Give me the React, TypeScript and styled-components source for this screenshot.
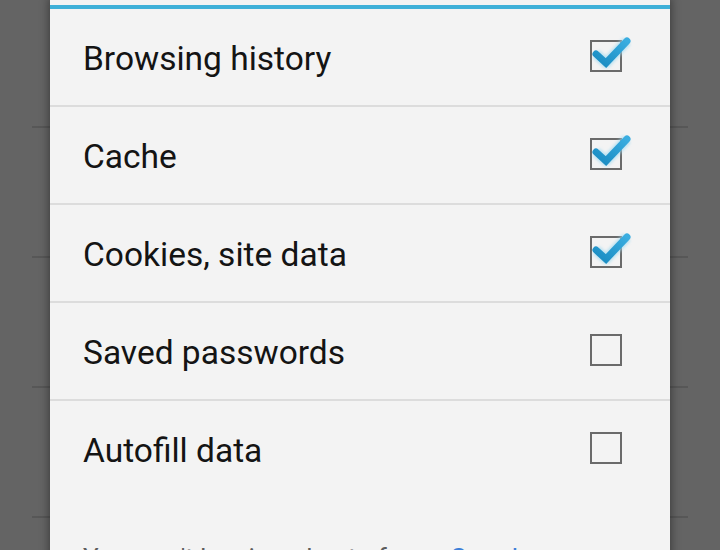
import React from 'react';
import styled, {createGlobalStyle} from "styled-components";

const GlobalStyle = createGlobalStyle`
  html, body {
    margin: 0;
    padding: 0;
    background: #646464;
    font-family: Roboto, "Noto Sans", sans-serif;
    overflow: hidden;
  }
`

type ItemType = {
    label: string
    checked: boolean
}

const items: ItemType[] = [
    {label: "Browsing history", checked: true},
    {label: "Cache", checked: true},
    {label: "Cookies, site data", checked: true},
    {label: "Saved passwords", checked: false},
    {label: "Autofill data", checked: false},
]

const CheckBox = (props: { checked: boolean }) => {
    return (
        <StyledCheck width="44" height="40" viewBox="0 0 44 40">
            <defs>
                <linearGradient id="tick" x1="0" y1="1" x2="1" y2="0">
                    <stop offset="0" stopColor="#1a8cc2"/>
                    <stop offset="1" stopColor="#3aade0"/>
                </linearGradient>
                <filter id="glow" x="-30%" y="-30%" width="160%" height="160%">
                    <feGaussianBlur stdDeviation="1.6"/>
                </filter>
            </defs>
            <rect x="2" y="5" width="30" height="30" fill="none" stroke="#6a6a6a" strokeWidth="2"/>
            {props.checked && <>
                <polyline points="7,18 17,27 38,5" fill="none" stroke="#9fd9f0" strokeWidth="10"
                          strokeLinejoin="round" filter="url(#glow)" opacity="0.7"/>
                <polyline points="7,18 17,27 38,5" fill="none" stroke="url(#tick)" strokeWidth="7"
                          strokeLinecap="round" strokeLinejoin="miter"/>
            </>}
        </StyledCheck>
    )
}

export default function App() {
    return (
        <>
            <GlobalStyle/>
            <Screen>
                <Backdrop>
                    <BackRow $first/>
                    <BackRow/>
                    <BackRow/>
                    <BackRow/>
                </Backdrop>
                <Dialog>
                    <AccentBar/>
                    {items.map((item, i) => (
                        <Row key={item.label} $last={i === items.length - 1}>
                            <Label>{item.label}</Label>
                            <CheckBox checked={item.checked}/>
                        </Row>
                    ))}
                    <Note>You won't be signed out of your <NoteLink>Google</NoteLink> account.</Note>
                </Dialog>
            </Screen>
        </>
    );
}

const Screen = styled.div`
  position: relative;
  width: 720px;
  height: 550px;
  overflow: hidden;
  background: #646464;
`

const Backdrop = styled.div`
  padding: 0 32px;
`

const BackRow = styled.div<{ $first?: boolean }>`
  height: ${props => props.$first ? 126 : 128}px;
  border-bottom: 2px solid #575757;
`

const Dialog = styled.div`
  position: absolute;
  top: 0;
  left: 50px;
  width: 620px;
  height: 600px;
  padding-top: 5px;
  box-sizing: border-box;
  background: #f3f3f3;
  box-shadow: 0 0 8px 2px rgba(0, 0, 0, 0.35);
`

const AccentBar = styled.div`
  height: 4px;
  background: #3fb0d8;
`

const Row = styled.div<{ $last?: boolean }>`
  height: 96px;
  display: flex;
  align-items: center;
  justify-content: space-between;
  padding: 0 37px 0 33px;
  border-bottom: 2px solid ${props => props.$last ? "transparent" : "#dcdcdc"};
`

const Label = styled.span`
  font-size: 33.5px;
  padding-top: 2px;
  color: #141414;
`

const StyledCheck = styled.svg`
  display: block;
  margin-top: -2px;
`

const Note = styled.p`
  margin: 0;
  padding: 44px 33px 0;
  font-size: 26px;
  line-height: 1.2;
  color: #5c5c5c;
`

const NoteLink = styled.span`
  color: #3d7fd8;
`
